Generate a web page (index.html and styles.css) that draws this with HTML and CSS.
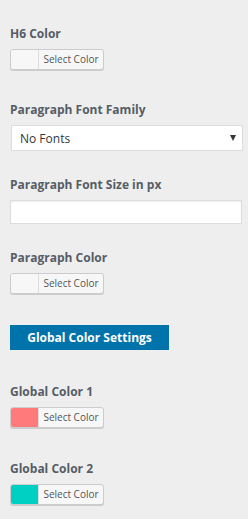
FILE: index.html
```html
<!DOCTYPE html>
<html>
<head>
<meta charset="utf-8">
<link rel="stylesheet" href="styles.css">
</head>
<body>
<ul class="controls">
  <li class="control control-color">
    <span class="label">H6 Color</span>
    <button class="color-btn"><span class="swatch"></span><span class="btn-text">Select Color</span></button>
  </li>
  <li class="control control-select">
    <span class="label">Paragraph Font Family</span>
    <div class="select"><span class="select-text">No Fonts</span><span class="arrow"></span></div>
  </li>
  <li class="control control-input">
    <span class="label">Paragraph Font Size in px</span>
    <div class="text-input"></div>
  </li>
  <li class="control control-color-last">
    <span class="label">Paragraph Color</span>
    <button class="color-btn"><span class="swatch"></span><span class="btn-text">Select Color</span></button>
  </li>
  <li class="control control-heading">
    <div class="section-btn">Global Color Settings</div>
  </li>
  <li class="control control-color control-color-wide">
    <span class="label">Global Color 1</span>
    <button class="color-btn"><span class="swatch swatch-red"></span><span class="btn-text">Select Color</span></button>
  </li>
  <li class="control control-color">
    <span class="label">Global Color 2</span>
    <button class="color-btn"><span class="swatch swatch-teal"></span><span class="btn-text">Select Color</span></button>
  </li>
</ul>
</body>
</html>
```
FILE: styles.css
```css
* { box-sizing: border-box; }
html, body { margin: 0; padding: 0; background: #eeeeee; }
body {
  font-family: "Open Sans", "Noto Sans", sans-serif;
  color: #555d66;
  width: 248px;
  height: 519px;
  overflow: hidden;
}
.controls {
  list-style: none;
  margin: 0;
  padding: 25px 6px 0 10px;
}
.control { display: flex; flex-direction: column; align-items: flex-start; }
.control-color { margin-bottom: 31px; }
.control-color-wide { margin-bottom: 32px; }
.control-select { margin-bottom: 25px; }
.control-input { margin-bottom: 25px; }
.control-color-last { margin-bottom: 31px; }
.control-heading { margin-bottom: 33px; }
.label {
  display: block;
  font-size: 12px;
  font-weight: 700;
  line-height: 18px;
  margin-bottom: 6px;
  color: #555d66;
}
.color-btn {
  display: flex;
  padding: 0;
  margin: 0;
  height: 21px;
  width: 94px;
  border: 1px solid #cccccc;
  border-radius: 3px;
  box-shadow: 0 1px 0 #cccccc;
  background: #f7f7f7;
  overflow: hidden;
  font-family: inherit;
}
.swatch {
  width: 28px;
  height: 100%;
  background: #f7f7f7;
  border-right: 1px solid #dddddd;
}
.swatch-red { background: #ff7a7a; }
.swatch-teal { background: #00cfc4; }
.btn-text {
  flex: 1;
  font-size: 10px;
  line-height: 19px;
  color: #555555;
  text-align: center;
}
.select {
  width: 232px;
  height: 26px;
  margin-left: 1px;
  background: #ffffff;
  border: 1px solid #dddddd;
  display: flex;
  align-items: center;
  justify-content: space-between;
  padding: 0 6px 0 8px;
}
.select-text { font-size: 12px; color: #32373c; }
.arrow {
  width: 0; height: 0;
  border-left: 3px solid transparent;
  border-right: 3px solid transparent;
  border-top: 6px solid #32373c;
}
.text-input {
  width: 232px;
  height: 24px;
  background: #ffffff;
  border: 1px solid #dddddd;
  box-shadow: inset 0 1px 2px rgba(0,0,0,0.07);
}
.section-btn {
  width: 159px;
  height: 25px;
  background: #0073aa;
  color: #ffffff;
  font-size: 12px;
  font-weight: 700;
  line-height: 25px;
  text-align: center;
}
```
